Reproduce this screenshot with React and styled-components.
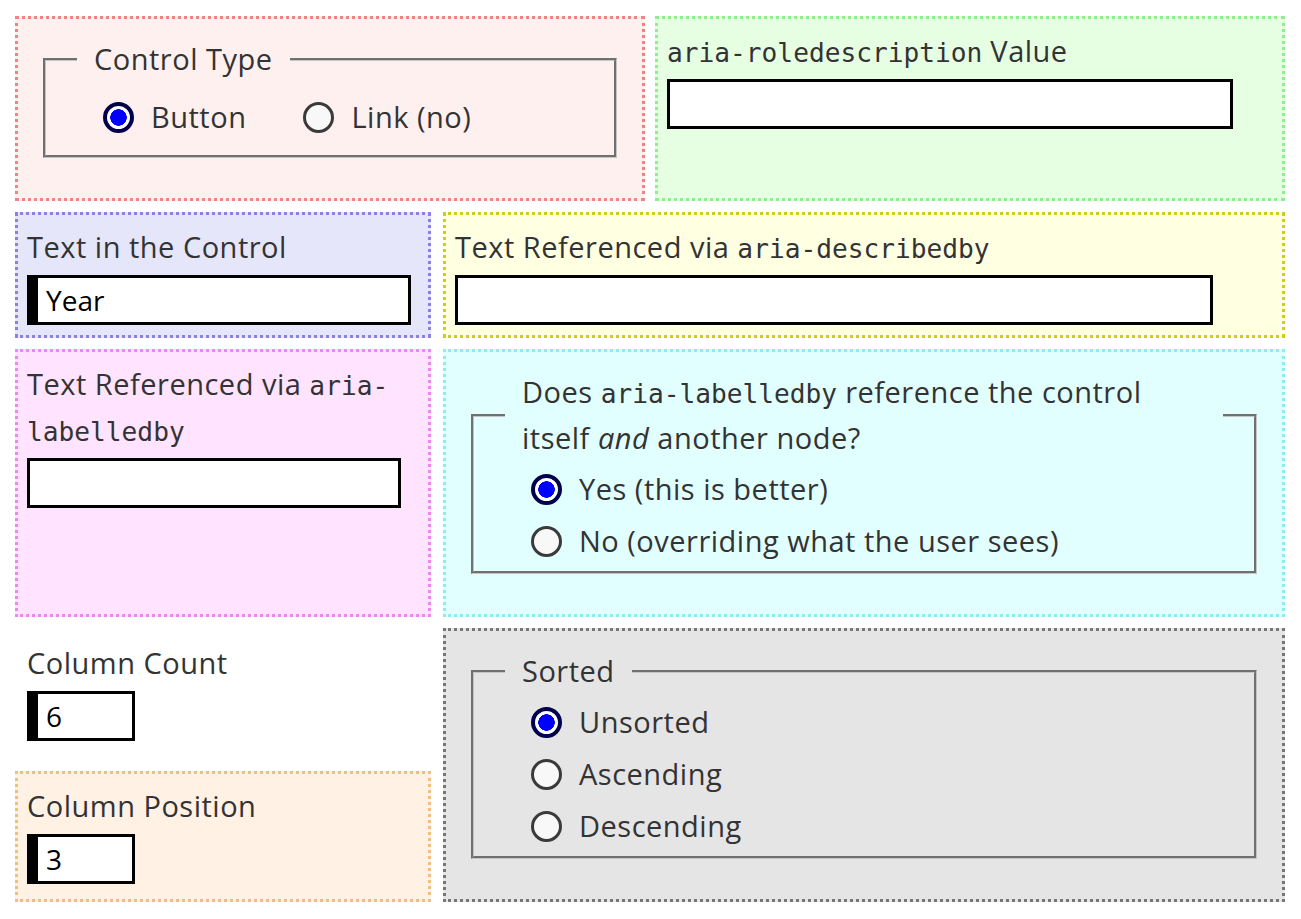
import React from "react";
import styled, { createGlobalStyle, css } from "styled-components";

const GlobalStyle = createGlobalStyle`
  body {
    margin: 0;
    background: #ffffff;
    color: #333333;
    font-family: "Open Sans", "Noto Sans", sans-serif;
    font-size: 29px;
    letter-spacing: 0.5px;
  }
`;

const Page = styled.main`
  width: 1270px;
  padding: 16px 15px;
`;

const TopRow = styled.div`
  display: grid;
  grid-template-columns: 1fr 1fr;
  column-gap: 10px;
  margin-bottom: 11px;
`;

const Grid = styled.div`
  display: grid;
  grid-template-columns: 416px 1fr;
  column-gap: 12px;
  row-gap: 11px;
`;

const Panel = styled.div`
  box-sizing: border-box;
  padding: 9px 9px 10px;
  border: 3px dotted ${(p) => p.$border || "transparent"};
  background: ${(p) => p.$bg || "transparent"};

  ${(p) =>
    p.$span &&
    css`
      grid-row: span ${p.$span};
    `};
`;

const Label = styled.label`
  display: block;
  line-height: 46px;
`;

const Code = styled.code`
  font-family: "DejaVu Sans Mono", "Liberation Mono", monospace;
  font-size: 26.2px;
  letter-spacing: 0;
  line-height: 1;
`;

const TextInput = styled.input`
  display: block;
  box-sizing: border-box;
  width: ${(p) => p.$width}px;
  height: 50px;
  margin: 5px 0 0;
  padding: 0 8px;
  border: 3px solid #000000;
  border-left-width: ${(p) => (p.value ? 11 : 3)}px;
  border-radius: 0;
  background: #ffffff;
  color: #000000;
  font-family: "Open Sans", "Noto Sans", sans-serif;
  font-size: 28px;
  outline: none;
`;

const Fieldset = styled.fieldset`
  margin: 8px 16px 30px 16px;
  padding: 0 31px 4px 31px;
  border: 3px groove #c4c4c4;
  min-width: 0;
`;

const Legend = styled.legend`
  padding: 0 17px;
  line-height: 46px;
`;

const Options = styled.div`
  display: flex;
  flex-direction: column;
  padding-top: 2px;
  padding-left: 26px;

  ${(p) =>
    p.$inline &&
    css`
      flex-direction: row;
      gap: 57px;
      padding-top: 9px;
      padding-bottom: 8px;
    `};
`;

const Option = styled.label`
  display: flex;
  align-items: center;
  gap: 17px;
  line-height: 46px;
  margin: 3px 0;
`;

const Radio = styled.input.attrs({ type: "radio" })`
  appearance: none;
  box-sizing: border-box;
  width: 31px;
  height: 31px;
  margin: 0;
  border: 3px solid #3a3a3a;
  border-radius: 50%;
  background: #f8f8f8;

  &:checked {
    border: 4px solid #00004d;
    background: radial-gradient(circle, #0000ff 0 8px, #ffffff 8.5px);
  }
`;

function RadioGroup({ name, legend, options, checked, inline }) {
  return (
    <Fieldset>
      <Legend>{legend}</Legend>
      <Options $inline={inline}>
        {options.map((o) => (
          <Option key={o}>
            <Radio name={name} defaultChecked={o === checked} />
            {o}
          </Option>
        ))}
      </Options>
    </Fieldset>
  );
}

export default function App() {
  return (
    <Page>
      <GlobalStyle />
      <TopRow>
        <Panel $bg="#fff0f0" $border="#ee8585">
          <RadioGroup
            name="ctype"
            legend="Control Type"
            options={["Button", "Link (no)"]}
            checked="Button"
            inline
          />
        </Panel>
        <Panel $bg="#e6ffe3" $border="#90ee90">
          <Label>
            <Code>aria-roledescription</Code> Value
          </Label>
          <TextInput $width={566} defaultValue="" />
        </Panel>
      </TopRow>
      <Grid>
        <Panel $bg="#e6e6fa" $border="#8f80e0">
          <Label>Text in the Control</Label>
          <TextInput $width={384} value="Year" readOnly />
        </Panel>
        <Panel $bg="#ffffe2" $border="#cccc22">
          <Label>
            Text Referenced via <Code>aria-describedby</Code>
          </Label>
          <TextInput $width={758} />
        </Panel>
        <Panel $bg="#ffe3ff" $border="#ee88ee">
          <Label>
            Text Referenced via <Code>aria-labelledby</Code>
          </Label>
          <TextInput $width={374} />
        </Panel>
        <Panel $bg="#e2ffff" $border="#88eeee">
          <RadioGroup
            name="ref"
            legend={
              <>
                Does <Code>aria-labelledby</Code> reference the control itself{" "}
                <em>and</em> another node?
              </>
            }
            options={["Yes (this is better)", "No (overriding what the user sees)"]}
            checked="Yes (this is better)"
          />
        </Panel>
        <Panel>
          <Label>Column Count</Label>
          <TextInput $width={108} value="6" readOnly />
        </Panel>
        <Panel $bg="#e5e5e5" $border="#777777" $span={2}>
          <RadioGroup
            name="sort"
            legend="Sorted"
            options={["Unsorted", "Ascending", "Descending"]}
            checked="Unsorted"
          />
        </Panel>
        <Panel $bg="#fff1e4" $border="#f0c07a">
          <Label>Column Position</Label>
          <TextInput $width={108} value="3" readOnly />
        </Panel>
      </Grid>
    </Page>
  );
}
